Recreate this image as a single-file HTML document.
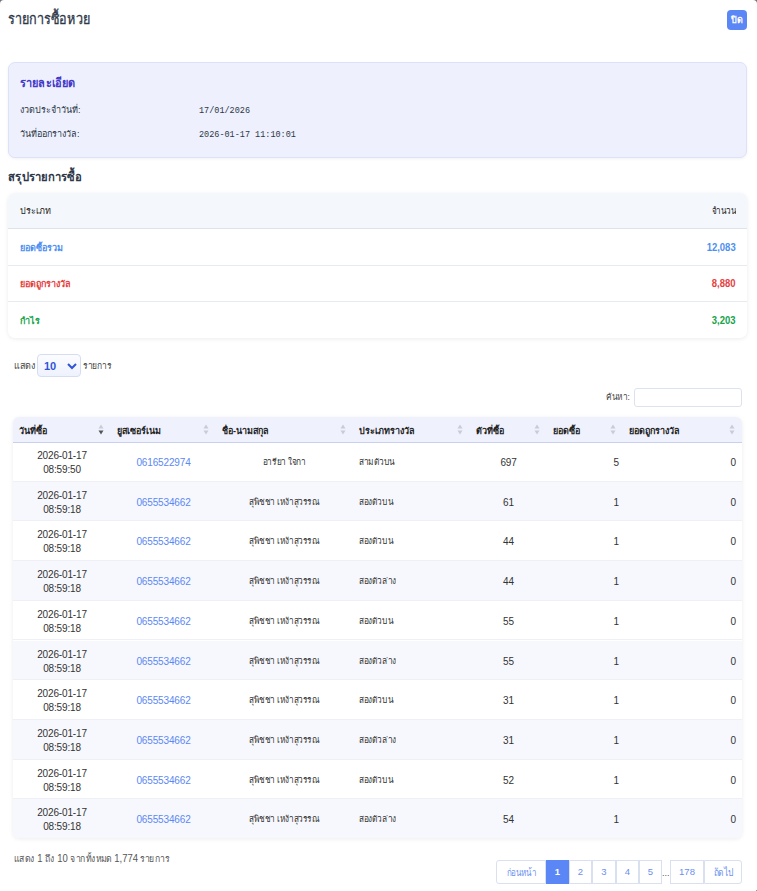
<!DOCTYPE html>
<html><head><meta charset="utf-8">
<style>
*{box-sizing:border-box;margin:0;padding:0}
html,body{width:757px;height:891px;overflow:hidden;background:#707070}
body{font-family:"Liberation Sans",sans-serif;color:#333;position:relative}
.s{display:inline-block;transform-origin:0 0;white-space:nowrap}
.modal{position:absolute;left:0;top:0;width:757px;height:891px;background:#fff;border-radius:4px 4px 0 0}
.title{position:absolute;left:8px;top:9px;font-size:14.5px;color:#2d3748;line-height:20px;-webkit-text-stroke:0.3px #2d3748}
.close{position:absolute;left:727px;top:10px;width:20px;height:20px;border-radius:4px;background:#5b86f6;color:#fff;font-size:9px;font-weight:bold;text-align:center;line-height:20px}
.card{position:absolute;left:8px;top:62px;width:739px;height:96px;background:#eef1fd;border:1px solid #dce2fc;border-radius:7px;box-shadow:0 1px 3px rgba(0,0,0,0.06)}
.card h3{position:absolute;left:11px;top:12px;font-size:12.5px;color:#4338ca;font-weight:bold;line-height:16px}
.card .lab{position:absolute;left:11px;font-size:9px;color:#2d3748;line-height:12px}
.card .val{position:absolute;left:190px;font-family:"Liberation Mono",monospace;font-size:8.5px;color:#2d3748;line-height:12px}
.sumh{position:absolute;left:8px;top:169px;font-size:12.5px;font-weight:bold;color:#2d3748;line-height:17px}
.sum{position:absolute;left:8px;top:193px;width:739px;height:145px;border-radius:7px;box-shadow:0 1px 4px rgba(0,0,0,0.08);overflow:hidden;background:#fff}
.sum .r{position:absolute;left:0;width:739px;font-size:9px;line-height:12px}
.sum .r span{position:absolute;left:12px}
.sum .r b{position:absolute;right:11px;font-size:11px;transform:scaleX(0.86);transform-origin:100% 0}
.len{position:absolute;left:14px;top:360px;font-size:9px;color:#444;line-height:12px}
.sel{position:absolute;left:37px;top:354px;width:44px;height:23px;border:1px solid #d6ddf0;border-radius:4px;background:linear-gradient(#fbfcff,#eef2fd)}
.sel span{position:absolute;left:6px;top:4px;font-size:11px;color:#2f54d8;font-weight:bold;line-height:14px}
.sel svg{position:absolute;left:29px;top:7px}
.len2{position:absolute;left:83px;top:360px;font-size:9px;color:#444;line-height:12px}
.srch{position:absolute;left:606px;top:391px;font-size:9px;color:#444;line-height:12px}
.inp{position:absolute;left:634px;top:388px;width:108px;height:19px;border:1px solid #dce2ee;border-radius:3px;background:#fff}
.dt{position:absolute;left:13px;top:417px;width:729px;height:421px;border-radius:6px;box-shadow:0 1px 4px rgba(0,0,0,0.08);overflow:hidden;background:#fff}
.thead{position:absolute;left:0;top:0;width:729px;height:26px;background:#eff1fd;border-bottom:1px solid #c7d0ee}
.th{position:absolute;top:0;height:25px;font-size:9px;font-weight:bold;color:#222;line-height:12px}
.th span{position:absolute;left:6px;top:8px;white-space:nowrap}
.si{position:absolute;right:7px;top:7px}
.tr{position:absolute;left:0;width:729px;height:39.7px;border-bottom:1px solid #eef0f5}
.tr.even{background:#f7f8fd}
.td{position:absolute;top:14px;font-size:10px;color:#333;line-height:14px;white-space:nowrap}
.td.dg{letter-spacing:-0.15px}
.td.th9{font-size:9px;top:13px}
.td.th9 .s{transform:scaleX(0.92);transform-origin:50% 0}
.td.th9 .s.sl{transform-origin:0 0}
.td.c{text-align:center}
.td.rt{text-align:right;padding-right:6px}
.td.lk{color:#5b88f2}
.dn{font-style:normal;font-size:10.5px}
.info{position:absolute;left:14px;top:852px;font-size:9.5px;color:#555;line-height:12px}
.pg{position:absolute;top:860px;height:24px;border:1px solid #d9e0f0;font-size:9.5px;color:#6b8ff0;text-align:center;line-height:22px;background:#fff}
.pg.on{background:#5b86f6;color:#fff;border-color:#5b86f6;font-weight:bold}
</style></head><body>
<div class="modal">
<div class="title"><span class="s" style="transform:scaleX(0.87)">รายการซื้อหวย</span></div>
<div class="close">ปิด</div>
<div class="card">
<h3><span class="s" style="transform:scaleX(0.88)">รายละเอียด</span></h3>
<div class="lab" style="top:41px">งวดประจำวันที่:</div>
<div class="val" style="top:42px">17/01/2026</div>
<div class="lab" style="top:65px">วันที่ออกรางวัล:</div>
<div class="val" style="top:66px">2026-01-17 11:10:01</div>
</div>
<div class="sumh"><span class="s" style="transform:scaleX(0.9)">สรุปรายการซื้อ</span></div>
<div class="sum">
<div class="r" style="top:0;height:36px;background:#f4f7fb;border-bottom:1px solid #dde3ea"><span style="top:12px;color:#222">ประเภท</span><b style="top:12px;font-weight:normal;color:#222;font-size:9px;transform:scaleX(0.9)">จำนวน</b></div>
<div class="r" style="top:36px;height:37px;border-bottom:1px solid #e6ebf1"><span style="top:13px;color:#4d8ff0;font-weight:bold">ยอดซื้อรวม</span><b style="top:12px;color:#4d8ff0">12,083</b></div>
<div class="r" style="top:73px;height:36px;border-bottom:1px solid #e6ebf1"><span style="top:12px;color:#e53e3e;font-weight:bold">ยอดถูกรางวัล</span><b style="top:11px;color:#e53e3e">8,880</b></div>
<div class="r" style="top:109px;height:37px"><span style="top:13px;color:#16a34a;font-weight:bold">กำไร</span><b style="top:12px;color:#16a34a">3,203</b></div>
</div>
<div class="len">แสดง</div>
<div class="sel"><span>10</span><svg width="10" height="8" viewBox="0 0 10 8"><path d="M1 2 L5 6 L9 2" fill="none" stroke="#2f54d8" stroke-width="2"/></svg></div>
<div class="len2"><span class="s" style="transform:scaleX(0.94)">รายการ</span></div>
<div class="srch"><span class="s" style="transform:scaleX(0.93)">ค้นหา:</span></div>
<div class="inp"></div>
<div class="dt">
<div class="thead">
<div class="th" style="left:0px;width:98px"><span>วันที่ซื้อ</span><svg class="si" width="6" height="11" viewBox="0 0 6 11"><path d="M0.5 4.5 L3 0.5 L5.5 4.5Z" fill="#c9ccd7"/><path d="M0.5 6.5 L5.5 6.5 L3 10.5Z" fill="#555"/></svg></div>
<div class="th" style="left:98px;width:105px"><span>ยูสเซอร์เนม</span><svg class="si" width="6" height="11" viewBox="0 0 6 11"><path d="M0.5 4.5 L3 0.5 L5.5 4.5Z" fill="#c9ccd7"/><path d="M0.5 6.5 L5.5 6.5 L3 10.5Z" fill="#c9ccd7"/></svg></div>
<div class="th" style="left:203px;width:137px"><span>ชื่อ-นามสกุล</span><svg class="si" width="6" height="11" viewBox="0 0 6 11"><path d="M0.5 4.5 L3 0.5 L5.5 4.5Z" fill="#c9ccd7"/><path d="M0.5 6.5 L5.5 6.5 L3 10.5Z" fill="#c9ccd7"/></svg></div>
<div class="th" style="left:340px;width:117px"><span>ประเภทรางวัล</span><svg class="si" width="6" height="11" viewBox="0 0 6 11"><path d="M0.5 4.5 L3 0.5 L5.5 4.5Z" fill="#c9ccd7"/><path d="M0.5 6.5 L5.5 6.5 L3 10.5Z" fill="#c9ccd7"/></svg></div>
<div class="th" style="left:457px;width:77px"><span>ตัวที่ซื้อ</span><svg class="si" width="6" height="11" viewBox="0 0 6 11"><path d="M0.5 4.5 L3 0.5 L5.5 4.5Z" fill="#c9ccd7"/><path d="M0.5 6.5 L5.5 6.5 L3 10.5Z" fill="#c9ccd7"/></svg></div>
<div class="th" style="left:534px;width:76px"><span>ยอดซื้อ</span><svg class="si" width="6" height="11" viewBox="0 0 6 11"><path d="M0.5 4.5 L3 0.5 L5.5 4.5Z" fill="#c9ccd7"/><path d="M0.5 6.5 L5.5 6.5 L3 10.5Z" fill="#c9ccd7"/></svg></div>
<div class="th" style="left:610px;width:119px"><span>ยอดถูกรางวัล</span><svg class="si" width="6" height="11" viewBox="0 0 6 11"><path d="M0.5 4.5 L3 0.5 L5.5 4.5Z" fill="#c9ccd7"/><path d="M0.5 6.5 L5.5 6.5 L3 10.5Z" fill="#c9ccd7"/></svg></div>
</div>
<div class="tr" style="top:25.00px">
<div class="td c dg" style="left:0;width:98px;top:7px">2026-01-17<br>08:59:50</div>
<div class="td c lk dg" style="left:98px;width:105px">0616522974</div>
<div class="td c th9" style="left:203px;width:137px"><span class="s">อารียา ใจกา</span></div>
<div class="td th9" style="left:346px"><span class="s sl">สามตัวบน</span></div>
<div class="td c dg" style="left:457px;width:77px">697</div>
<div class="td rt" style="left:534px;width:76px;padding-right:4px">5</div>
<div class="td rt" style="left:610px;width:119px">0</div>
</div>
<div class="tr even" style="top:64.70px">
<div class="td c dg" style="left:0;width:98px;top:7px">2026-01-17<br>08:59:18</div>
<div class="td c lk dg" style="left:98px;width:105px">0655534662</div>
<div class="td c th9" style="left:203px;width:137px"><span class="s">สุพิชชา เหง้าสุวรรณ</span></div>
<div class="td th9" style="left:346px"><span class="s sl">สองตัวบน</span></div>
<div class="td c dg" style="left:457px;width:77px">61</div>
<div class="td rt" style="left:534px;width:76px;padding-right:4px">1</div>
<div class="td rt" style="left:610px;width:119px">0</div>
</div>
<div class="tr" style="top:104.40px">
<div class="td c dg" style="left:0;width:98px;top:7px">2026-01-17<br>08:59:18</div>
<div class="td c lk dg" style="left:98px;width:105px">0655534662</div>
<div class="td c th9" style="left:203px;width:137px"><span class="s">สุพิชชา เหง้าสุวรรณ</span></div>
<div class="td th9" style="left:346px"><span class="s sl">สองตัวบน</span></div>
<div class="td c dg" style="left:457px;width:77px">44</div>
<div class="td rt" style="left:534px;width:76px;padding-right:4px">1</div>
<div class="td rt" style="left:610px;width:119px">0</div>
</div>
<div class="tr even" style="top:144.10px">
<div class="td c dg" style="left:0;width:98px;top:7px">2026-01-17<br>08:59:18</div>
<div class="td c lk dg" style="left:98px;width:105px">0655534662</div>
<div class="td c th9" style="left:203px;width:137px"><span class="s">สุพิชชา เหง้าสุวรรณ</span></div>
<div class="td th9" style="left:346px"><span class="s sl">สองตัวล่าง</span></div>
<div class="td c dg" style="left:457px;width:77px">44</div>
<div class="td rt" style="left:534px;width:76px;padding-right:4px">1</div>
<div class="td rt" style="left:610px;width:119px">0</div>
</div>
<div class="tr" style="top:183.80px">
<div class="td c dg" style="left:0;width:98px;top:7px">2026-01-17<br>08:59:18</div>
<div class="td c lk dg" style="left:98px;width:105px">0655534662</div>
<div class="td c th9" style="left:203px;width:137px"><span class="s">สุพิชชา เหง้าสุวรรณ</span></div>
<div class="td th9" style="left:346px"><span class="s sl">สองตัวบน</span></div>
<div class="td c dg" style="left:457px;width:77px">55</div>
<div class="td rt" style="left:534px;width:76px;padding-right:4px">1</div>
<div class="td rt" style="left:610px;width:119px">0</div>
</div>
<div class="tr even" style="top:223.50px">
<div class="td c dg" style="left:0;width:98px;top:7px">2026-01-17<br>08:59:18</div>
<div class="td c lk dg" style="left:98px;width:105px">0655534662</div>
<div class="td c th9" style="left:203px;width:137px"><span class="s">สุพิชชา เหง้าสุวรรณ</span></div>
<div class="td th9" style="left:346px"><span class="s sl">สองตัวล่าง</span></div>
<div class="td c dg" style="left:457px;width:77px">55</div>
<div class="td rt" style="left:534px;width:76px;padding-right:4px">1</div>
<div class="td rt" style="left:610px;width:119px">0</div>
</div>
<div class="tr" style="top:263.20px">
<div class="td c dg" style="left:0;width:98px;top:7px">2026-01-17<br>08:59:18</div>
<div class="td c lk dg" style="left:98px;width:105px">0655534662</div>
<div class="td c th9" style="left:203px;width:137px"><span class="s">สุพิชชา เหง้าสุวรรณ</span></div>
<div class="td th9" style="left:346px"><span class="s sl">สองตัวบน</span></div>
<div class="td c dg" style="left:457px;width:77px">31</div>
<div class="td rt" style="left:534px;width:76px;padding-right:4px">1</div>
<div class="td rt" style="left:610px;width:119px">0</div>
</div>
<div class="tr even" style="top:302.90px">
<div class="td c dg" style="left:0;width:98px;top:7px">2026-01-17<br>08:59:18</div>
<div class="td c lk dg" style="left:98px;width:105px">0655534662</div>
<div class="td c th9" style="left:203px;width:137px"><span class="s">สุพิชชา เหง้าสุวรรณ</span></div>
<div class="td th9" style="left:346px"><span class="s sl">สองตัวล่าง</span></div>
<div class="td c dg" style="left:457px;width:77px">31</div>
<div class="td rt" style="left:534px;width:76px;padding-right:4px">1</div>
<div class="td rt" style="left:610px;width:119px">0</div>
</div>
<div class="tr" style="top:342.60px">
<div class="td c dg" style="left:0;width:98px;top:7px">2026-01-17<br>08:59:18</div>
<div class="td c lk dg" style="left:98px;width:105px">0655534662</div>
<div class="td c th9" style="left:203px;width:137px"><span class="s">สุพิชชา เหง้าสุวรรณ</span></div>
<div class="td th9" style="left:346px"><span class="s sl">สองตัวบน</span></div>
<div class="td c dg" style="left:457px;width:77px">52</div>
<div class="td rt" style="left:534px;width:76px;padding-right:4px">1</div>
<div class="td rt" style="left:610px;width:119px">0</div>
</div>
<div class="tr even" style="top:382.30px">
<div class="td c dg" style="left:0;width:98px;top:7px">2026-01-17<br>08:59:18</div>
<div class="td c lk dg" style="left:98px;width:105px">0655534662</div>
<div class="td c th9" style="left:203px;width:137px"><span class="s">สุพิชชา เหง้าสุวรรณ</span></div>
<div class="td th9" style="left:346px"><span class="s sl">สองตัวล่าง</span></div>
<div class="td c dg" style="left:457px;width:77px">54</div>
<div class="td rt" style="left:534px;width:76px;padding-right:4px">1</div>
<div class="td rt" style="left:610px;width:119px">0</div>
</div>
</div>
<div class="info"><span class="s" style="transform:scaleX(0.905)">แสดง <i class="dn">1</i> ถึง <i class="dn">10</i> จากทั้งหมด <i class="dn">1,774</i> รายการ</span></div>
<div class="pg" style="left:496px;width:50px;border-radius:3px 0 0 3px;font-size:10.5px"><span class="s" style="transform:scaleX(0.76);transform-origin:50% 0">ก่อนหน้า</span></div>
<div class="pg on" style="left:546px;width:23px">1</div>
<div class="pg" style="left:569px;width:23px">2</div>
<div class="pg" style="left:592px;width:24px">3</div>
<div class="pg" style="left:616px;width:23px">4</div>
<div class="pg" style="left:639px;width:23px">5</div>
<div style="position:absolute;left:662px;top:868px;font-size:9px;color:#555">...</div>
<div class="pg" style="left:670px;width:34px">178</div>
<div class="pg" style="left:704px;width:38px;border-radius:0 3px 3px 0;font-size:10.5px"><span class="s" style="transform:scaleX(0.8);transform-origin:50% 0">ถัดไป</span></div>
<div style="position:absolute;left:756px;top:890px;width:1px;height:1px;background:#999"></div>
</div>
</body></html>
